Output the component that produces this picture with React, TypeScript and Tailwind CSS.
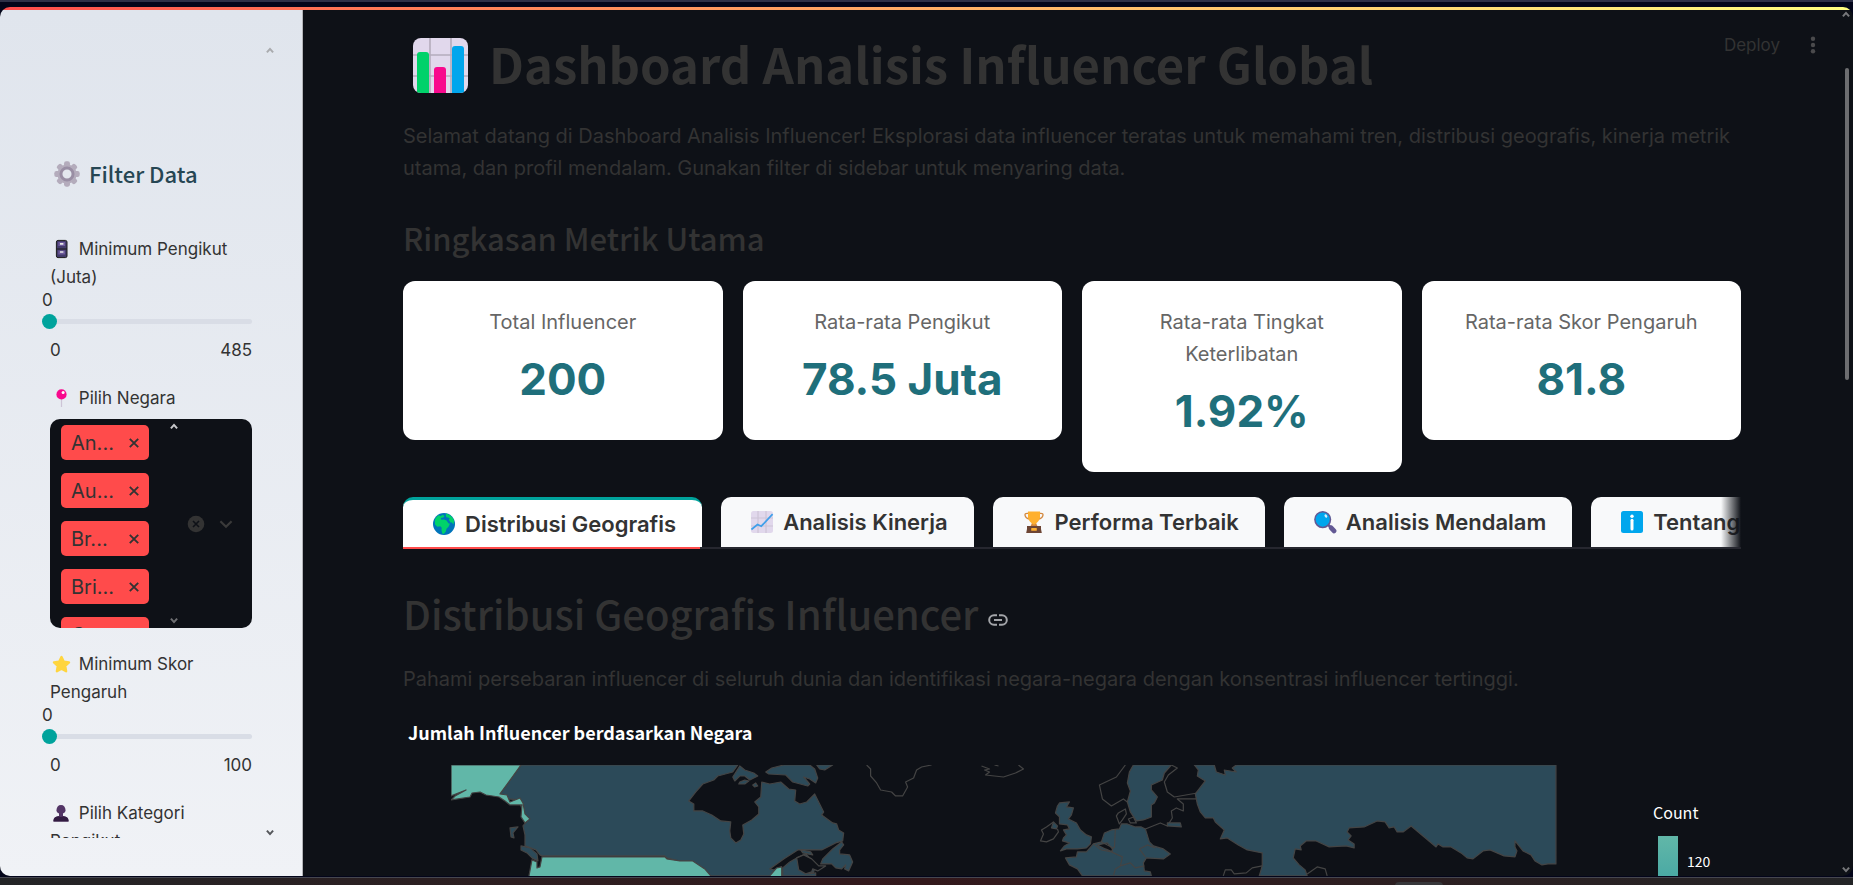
import type { ReactNode } from "react";

const SOURCE = "font-['Noto_Sans_CJK_SC',sans-serif]";

function Chevron({ up = false, className = "" }: { up?: boolean; className?: string }) {
  return (
    <svg viewBox="0 0 8 8" className={`pointer-events-none h-2 w-2 ${className}`} aria-hidden="true">
      <path d={up ? "M0.9 6.4 4 2.9 7.1 6.4" : "M0.9 1.6 4 5.1 7.1 1.6"} fill="none" stroke="currentColor" strokeWidth="2" />
    </svg>
  );
}

function BarChartIcon() {
  return (
    <svg viewBox="0 0 56 56" className="mt-[6px] h-14 w-14 shrink-0" aria-hidden="true">
      <clipPath id="bars"><rect x="0" y="0" width="55" height="55" rx="8" /></clipPath>
      <g clipPath="url(#bars)">
        <rect width="55" height="55" fill="#e1d8ec" />
        <path d="M17 0v55M38 0v55M0 17h55M0 38h55" stroke="#b4acbc" strokeWidth="1.6" />
        <path d="M4 56V17q0-3 3-3h6q3 0 3 3v39z" fill="#00d26a" />
        <path d="M21 56V32q0-3 3-3h6q3 0 3 3v24z" fill="#f8098d" />
        <path d="M39 56V11q0-3 3-3h6q3 0 3 3v45z" fill="#00a6ed" />
      </g>
    </svg>
  );
}

function GearIcon() {
  return (
    <svg viewBox="0 0 32 32" className="mt-[2px] h-7 w-7 shrink-0" aria-hidden="true">
      <g fill="#b4acbc">
        {[0, 45, 90, 135].map((a) => (
          <rect key={a} x="12.6" y="1.5" width="6.8" height="29" rx="2.4" transform={`rotate(${a} 16 16)`} />
        ))}
        <circle cx="16" cy="16" r="11" />
      </g>
      <circle cx="16" cy="16" r="6.9" fill="#e3e7ee" stroke="#998ea4" strokeWidth="3.4" />
    </svg>
  );
}

function CabinetIcon() {
  return (
    <svg viewBox="0 0 24 20" className="inline h-5 w-6 align-[-4px]" aria-hidden="true">
      <rect x="6.4" y="1.4" width="10.6" height="17.2" rx="1.6" fill="#433b6b" stroke="#1c1c1c" strokeWidth="1" />
      <path d="M6.4 10h10.6" stroke="#1c1c1c" strokeWidth="1" />
      <path d="M8.3 3h6.8v4H8.3zM8.3 11.5h6.8v4H8.3z" fill="#6d5a9c" />
      <path d="M10 4.8h3.4M10 13h3.4" stroke="#e6e6e6" strokeWidth="1.7" />
    </svg>
  );
}

function PinIcon() {
  return (
    <svg viewBox="0 0 24 20" className="inline h-5 w-6 align-[-4px]" aria-hidden="true">
      <path d="M11.5 10v9" stroke="#cdc4d6" strokeWidth="1.2" />
      <circle cx="11.5" cy="6.4" r="5.1" fill="#f8098d" />
      <circle cx="13.1" cy="4.6" r="1.5" fill="#fff" />
    </svg>
  );
}

function StarIcon() {
  return (
    <svg viewBox="0 0 24 20" className="inline h-5 w-6 align-[-4px]" aria-hidden="true">
      <path d="M11.5 3 13.8 7.7 19 8.4 15.2 12 16.1 17.2 11.5 14.8 6.9 17.2 7.8 12 4 8.4 9.2 7.7z" fill="#ffd53e" stroke="#ffd53e" strokeWidth="2.4" strokeLinejoin="round" />
    </svg>
  );
}

function PersonIcon() {
  return (
    <svg viewBox="0 0 24 20" className="inline h-5 w-6 align-[-4px]" aria-hidden="true">
      <path d="M3.5 18.5v-1.2Q3.8 13.4 9 13V10.5Q6.4 9.7 6.4 7.6 6.7 2 11 2t4.6 5.6q0 2.1-2.6 2.9V13q5.2.4 5.5 4.3v1.2z" fill="#533566" />
      <path d="M3.5 18.5v-1.2Q3.8 13.9 8.6 13.2q2.4 1.6 4.8 0 4.8.7 5.1 4.1v1.2z" fill="#321b41" />
    </svg>
  );
}

function GlobeIcon() {
  return (
    <svg viewBox="0 0 24 24" className="h-6 w-6" aria-hidden="true">
      <circle cx="12" cy="12" r="11" fill="#0074ba" />
      <path d="M3 7.5Q4 5 6.5 3.2L8.6 4l2.2-1.2L12.5 4l-1 1.6-2.6.5.4 1.6 2.6-.3 2.6 1.2 1.8 2.7 1.6.4-1.4 3-2 2-.8 3-2 2.3-1.4-.4-.8-3.4.2-2.4-1.4-1.5-3 .4L3 12.5 2.9 9.6z" fill="#00d26a" />
      <path d="M14 1.5Q20 3 22 8.4l-.5 4-1.8-2.2-.9.6-2-3.1 1-1.3-1.7-.8-1.8-.4-.5-1.8z" fill="#00d26a" />
    </svg>
  );
}

function LineChartIcon() {
  return (
    <svg viewBox="0 0 24 24" className="h-6 w-6" aria-hidden="true">
      <rect x="1" y="1" width="22" height="22" rx="2.5" fill="#e1d8ec" />
      <path d="M8 1v22M16 1v22M1 8h22M1 16h22" stroke="#cdc4d6" strokeWidth="1.2" />
      <path d="M1.4 19.5 7.5 14.5 11.3 16.2 22.6 4.2" fill="none" stroke="#3f9fea" strokeWidth="1.7" />
    </svg>
  );
}

function TrophyIcon() {
  return (
    <svg viewBox="0 0 24 24" className="h-6 w-6" aria-hidden="true">
      <path d="M7 3.4H5.2Q2.8 3.4 3 5.2q.6 3.4 4.6 3.8M17 3.4h1.8q2.4 0 2.2 1.8-.6 3.4-4.6 3.8" fill="none" stroke="#d3883e" strokeWidth="1.3" />
      <path d="M10.8 11h2.4l2.6 6H8.2z" fill="#d3883e" />
      <path d="M6 1.5h12v6q-.8 4.2-6 7.3-5.2-3.1-6-7.3z" fill="#ffb02e" />
      <path d="M5 16h14v3l.8 4H4.2l.8-4z" fill="#6d4534" />
      <rect x="9.2" y="18" width="5.6" height="2.8" rx=".6" fill="#ffb02e" />
    </svg>
  );
}

function LensIcon() {
  return (
    <svg viewBox="0 0 24 24" className="h-6 w-6" aria-hidden="true">
      <path d="m15 14.6 2.4 2.4" stroke="#635994" strokeWidth="2.6" />
      <path d="m18.2 17.9 2.8 3" stroke="#635994" strokeWidth="4.8" strokeLinecap="round" />
      <circle cx="9.7" cy="9.6" r="7.8" fill="#00a6ed" stroke="#635994" strokeWidth="1.5" />
      <ellipse cx="12.9" cy="6" rx="1.2" ry="1.8" fill="#d3effc" transform="rotate(-35 12.9 6)" />
    </svg>
  );
}

function InfoIcon() {
  return (
    <svg viewBox="0 0 24 24" className="h-6 w-6" aria-hidden="true">
      <rect x="1" y="1" width="22" height="22" rx="2.5" fill="#00a6ed" />
      <circle cx="12" cy="6.2" r="1.7" fill="#fff" />
      <path d="M12 10.2v8.8" stroke="#fff" strokeWidth="3" strokeLinecap="round" />
    </svg>
  );
}

function RangeField({ id, icon, label, max }: { id: string; icon: ReactNode; label: string; max: number }) {
  return (
    <div>
      <label htmlFor={id} className="block leading-7">
        {icon} {label}
      </label>
      <output htmlFor={id} className="-ml-2 block leading-[19px]">0</output>
      <input
        id={id}
        type="range"
        min={0}
        max={max}
        defaultValue={0}
        className="-ml-2 mt-[3px] block h-4 w-[calc(100%+8px)] appearance-none bg-transparent [&::-webkit-slider-runnable-track]:h-[5px] [&::-webkit-slider-runnable-track]:rounded-full [&::-webkit-slider-runnable-track]:bg-[#d9dde6] [&::-webkit-slider-thumb]:-mt-[5px] [&::-webkit-slider-thumb]:size-[15px] [&::-webkit-slider-thumb]:appearance-none [&::-webkit-slider-thumb]:rounded-full [&::-webkit-slider-thumb]:bg-[#00a39c]"
      />
      <div className="mt-[9px] flex justify-between leading-6">
        <span>0</span>
        <span>{max}</span>
      </div>
    </div>
  );
}

const countries = ["An...", "Au...", "Br...", "Bri...", "Ca..."];

function CountrySelect() {
  return (
    <div>
      <div id="negara" className="leading-7">
        <PinIcon /> Pilih Negara
      </div>
      <div role="group" aria-labelledby="negara" className="relative mt-[7px] flex h-[209px] items-center overflow-hidden rounded-[10px] bg-[#0e1117]">
        <ul className="flex h-full w-[118px] flex-col gap-[13px] overflow-hidden pt-[6px] pl-[11px]">
          {countries.map((c) => (
            <li key={c} className="flex h-[35px] w-[88px] shrink-0 items-center justify-between rounded-[5px] bg-[#ff4b4b] pr-[9px] pl-[10px] text-xl">
              {c}
              <button type="button" aria-label={`Hapus ${c}`}>
                <svg viewBox="0 0 12 12" className="size-3" aria-hidden="true">
                  <path d="m1.8 1.8 8.4 8.4M10.2 1.8 1.8 10.2" stroke="currentColor" strokeWidth="1.9" />
                </svg>
              </button>
            </li>
          ))}
        </ul>
        <div className="flex h-full flex-col justify-between py-[3px] pl-[2px]">
          <Chevron up className="text-[#c8c9cc]" />
          <Chevron className="text-[#6f7073]" />
        </div>
        <div className="flex grow items-center justify-end gap-[14px] pr-[19px]">
          <button type="button" aria-label="Hapus semua">
            <svg viewBox="0 0 18 18" className="size-[18px]" aria-hidden="true">
              <circle cx="9" cy="9" r="8.3" fill="#333" />
              <path d="m6 6 6 6M12 6l-6 6" stroke="#0e1117" strokeWidth="1.6" />
            </svg>
          </button>
          <button type="button" aria-label="Buka daftar">
            <svg viewBox="0 0 14 18" className="h-[18px] w-[14px]" aria-hidden="true">
              <path d="M1.4 6.2 7 11.8l5.6-5.6" fill="none" stroke="#3a3a3a" strokeWidth="2.2" />
            </svg>
          </button>
        </div>
      </div>
    </div>
  );
}

function Sidebar() {
  return (
    <aside className="relative flex w-[303px] shrink-0 flex-col border-r border-[#b3b4b8] bg-linear-to-b from-[#e0e5ed] to-[#f0f2f6] pb-[38px] text-[17px] text-[#333]">
      <Chevron up className="absolute top-[36px] right-[28px] text-[#a9abae]" />
      <div className="flex min-h-0 grow flex-col overflow-hidden pt-[148px] pr-[50px] pl-[50px]">
        <h2 className={`flex shrink-0 items-center gap-[8px] pl-[3px] text-[22px] leading-[30px] font-medium text-[#264653] ${SOURCE}`}>
          <GearIcon />
          Filter Data
        </h2>
        <div className="mt-[47px] flex flex-col gap-[22px]">
          <RangeField id="pengikut" icon={<CabinetIcon />} label="Minimum Pengikut (Juta)" max={485} />
          <CountrySelect />
          <RangeField id="skor" icon={<StarIcon />} label="Minimum Skor Pengaruh" max={100} />
          <div className="leading-7">
            <PersonIcon /> Pilih Kategori Pengikut
          </div>
        </div>
      </div>
      <Chevron className="absolute right-[28px] bottom-[39px] text-[#55575b]" />
    </aside>
  );
}

const metrics = [
  { label: "Total Influencer", value: "200" },
  { label: "Rata-rata Pengikut", value: "78.5 Juta" },
  { label: "Rata-rata Tingkat Keterlibatan", value: "1.92%" },
  { label: "Rata-rata Skor Pengaruh", value: "81.8" },
];

const tabs = [
  { label: "Distribusi Geografis", icon: <GlobeIcon /> },
  { label: "Analisis Kinerja", icon: <LineChartIcon /> },
  { label: "Performa Terbaik", icon: <TrophyIcon /> },
  { label: "Analisis Mendalam", icon: <LensIcon /> },
  { label: "Tentang", icon: <InfoIcon /> },
];

function Tabs() {
  return (
    <div className="relative mt-[25px] overflow-hidden">
      <div role="tablist" className="flex gap-[19px] border-b-2 border-[#26272f]">
        {tabs.map((t, i) => (
          <button
            key={t.label}
            type="button"
            role="tab"
            aria-selected={i === 0}
            className={`flex h-[50px] shrink-0 items-center gap-[9px] rounded-t-[10px] pr-[26px] pl-[29px] text-[22px] font-semibold whitespace-nowrap text-[#333] ${
              i === 0
                ? "relative border-t-[3px] border-[#00a39c] bg-white after:absolute after:top-full after:right-[2px] after:left-0 after:h-[2px] after:bg-[#ff4b4b]"
                : "bg-[#f8f9fa]"
            }`}
          >
            {t.icon}
            {t.label}
          </button>
        ))}
      </div>
      <div className="absolute top-0 right-0 h-[50px] w-5 bg-linear-to-r from-transparent to-[#0e1117]" />
    </div>
  );
}

const TEAL = "#61b7a8";
const BLUE = "#2c4a59";

function WorldMap() {
  return (
    <svg viewBox="451 765 1107 140" className="min-w-0 flex-1" role="img" aria-label="Peta jumlah influencer">
      <g stroke="#444" strokeWidth="1.2" strokeLinejoin="round">
        {/* Kanada */}
        <path fill={BLUE} d="M521 765H738L733 772 718 776 714 780 703 784 696 792 689 801 694 804 694 811 703 811 712 815 721 821 731 822 730 831 731 838 736 843 741 840 744 834 743 825 752 820 759 814 759 807 755 802 761 797 762 782 770 784 781 782 789 789 796 790 795 801 800 804 807 802 815 794 821 806 824 812 822 815 833 823 837 824 839 830 844 833 843 841 836 843 822 850 798 850 784 859 770 869 774 870 782 867 783 876 708 876 704 871 694 862 682 862 667 858 665 856 542 856 540 855 536 850 525 846 525 835 523 826 528 820 523 812 519 800 508 799 500 794z" />
        {/* Alaska */}
        <path fill={TEAL} d="M451 765H521L500 794 507 795 510 802 520 798 523 803 525 814 530 819 525 823 521 817 522 805 510 805 505 801 499 797 486 795 480 792 472 793 470 797 451 800 455 796 466 790 451 796z" />
        {/* Amerika Serikat */}
        <path fill={TEAL} d="M542 857H665L667 859 680 861 693 861 705 869 711 876 711 905H528L529 876 532 860 537 862 537 868 540 867zM770 876 777 868 782 867 782 880 768 880z" />
        {/* Pulau dan teluk */}
        <path fill={BLUE} d="M510 828 518 827 513 833 514 838 511 837zM521 846 530 848 537 854 538 861 532 858 527 853 521 850zM740 766 733 777 735 781 740 776 745 776 750 780 758 776 754 773 745 770zM740 782 745 780 749 781 745 784 739 784zM753 785 756 783 758 786 755 787zM766 772 772 768 784 765H810L815 769 818 778 816 783 810 779 804 777 810 784 808 786 793 782 786 775 769 774zM817 765H833L825 770 820 769zM842 842 844 845 840 850 840 854 850 855 853 862 849 871 845 869 846 865 842 869 836 868 832 864 821 864 823 859 833 849zM801 850 811 852 813 855 803 853zM797 858 806 854 816 864 814 872 809 874 816 873 816 876H783L783 868 790 862z" />
        <path fill="#0e1117" d="M797 858 804 855 812 859 819 866 826 866 818 871 813 869 812 872 806 874 799 870z" />
        <path fill="none" d="M867 765 871 769 871 776 877 783 881 790 892 792 896 796 903 796 908 787 906 782 914 778 917 770 922 767 932 765M982 766 990 769 985 770 990 772 986 775 1004 777 1016 773 1024 769 1019 765M995 765 999 766" />
        {/* Inggris Raya dan Irlandia */}
        <path fill={BLUE} d="M1060 803 1070 802 1067 807 1074 808 1072 815 1069 819 1077 823 1081 830 1087 835 1092 837 1091 844 1087 848 1078 849 1067 849 1061 851 1065 846 1070 843 1063 841 1064 838 1067 835 1064 830 1070 829 1068 825 1060 824 1060 817 1056 813 1058 806zM1054 822 1058 826 1057 829 1052 828z" />
        <path fill="none" d="M1054 822 1047 827 1042 830 1044 834 1041 841 1047 842 1054 839 1059 832 1058 829" />
        {/* Eropa Barat */}
        <path fill={BLUE} d="M1066 858 1077 857 1078 852 1087 852 1094 844 1102 842 1105 833 1112 830 1120 829 1122 824 1128 824 1136 827 1142 827 1146 829 1150 842 1154 846 1164 849 1171 854 1164 859 1147 858 1144 863 1145 871 1151 872 1152 876H1083L1078 869 1070 865z" />
        <path fill="#0e1117" d="M1098 845 1108 843 1113 849 1113 852 1106 849z" />
        <path fill="none" d="M1094 844 1102 850 1112 852 1123 857 1121 866 1116 869 1114 876M1116 829 1115 848M1112 852 1114 848 1102 842M1140 849 1148 845 1156 848M1140 849 1146 857M1121 866 1131 863 1136 868 1145 866" />
        {/* Skandinavia */}
        <path fill={BLUE} d="M1134 765H1172L1165 773 1163 780 1152 785 1152 790 1158 797 1155 803 1152 805 1152 817 1144 820 1137 821 1131 812 1128 802 1131 791 1128 783 1130 772z" />
        <path fill="none" d="M1126 765 1117 777 1100 785 1103 799 1112 806 1124 799 1128 802M1119 813 1126 809 1127 814 1123 820 1120 824 1117 816zM1129 819 1134 817 1137 823 1131 823zM1172 765 1178 768 1169 775 1165 782 1168 792 1175 797 1198 793M1146 829 1161 823 1168 826 1173 818 1172 811 1177 808 1184 811 1184 804 1178 799 1198 799" />
        <path fill={BLUE} d="M1168 823 1181 823 1182 827 1168 826z" />
        {/* Rusia */}
        <path fill={BLUE} d="M1195 765H1557V864L1549 864 1543 865 1536 861 1532 855 1524 851 1516 841 1516 847 1518 851 1516 857 1505 856 1491 850 1484 851 1474 859 1468 858 1462 853 1452 847 1444 847 1439 844 1437 847 1412 826 1404 832 1398 832 1395 827 1390 828 1386 822 1378 821 1365 827 1350 828 1348 832 1352 836 1349 840 1355 844 1355 848 1347 846 1330 847 1317 841 1307 841 1301 846 1302 850 1296 849 1294 858 1300 865 1306 870 1308 876H1260L1263 866 1263 853 1248 850 1239 845 1228 838 1221 839 1225 830 1216 822 1214 818 1206 818 1201 812 1198 804 1196 794 1206 781 1198 776 1199 770z" />
        <path fill="#0e1117" d="M1215 765 1217 772 1226 775 1225 770 1237 772 1233 768 1237 765" />
        <path fill="none" d="M1224 876 1226 870 1232 870 1235 874 1247 873 1253 868 1263 866M1308 874 1318 867 1326 869 1328 876" />
      </g>
    </svg>
  );
}

function MainPanel() {
  return (
    <main className="relative min-w-0 flex-1 overflow-hidden pt-5 pr-[112px] pl-[100px] text-xl leading-8 text-[#333]">
      <div className="absolute top-[23px] right-[37px] flex items-center gap-[30px]">
        <button type="button" className="text-[17px] leading-6">Deploy</button>
        <button type="button" aria-label="Menu">
          <svg viewBox="0 0 6 18" className="h-[18px] w-[6px]" fill="#4a4a4c" aria-hidden="true">
            <circle cx="3" cy="2.8" r="2.2" /><circle cx="3" cy="9" r="2.2" /><circle cx="3" cy="15.2" r="2.2" />
          </svg>
        </button>
      </div>
      <Chevron up className="absolute top-0 right-[3px] text-[#77787b]" />
      <div className="absolute top-[58px] right-1 h-[312px] w-1 rounded-full bg-[#6c6d70]" />
      <Chevron className="absolute right-[3px] bottom-[2px] text-[#77787b]" />

      <h1 className={`flex items-center gap-5 pl-[10px] text-[49px] leading-[66px] font-bold whitespace-nowrap ${SOURCE}`}>
        <BarChartIcon />
        Dashboard Analisis Influencer Global
      </h1>
      <p className="mt-6">
        Selamat datang di Dashboard Analisis Influencer! Eksplorasi data influencer teratas untuk memahami tren, distribusi geografis, kinerja metrik utama, dan profil mendalam. Gunakan filter di sidebar untuk menyaring data.
      </p>
      <h3 className={`mt-[33px] text-[31px] leading-[42px] font-medium ${SOURCE}`}>Ringkasan Metrik Utama</h3>
      <div className="mt-[22px] grid grid-cols-4 items-start gap-5">
        {metrics.map((m) => (
          <div key={m.label} className="rounded-xl bg-white p-[25px] text-center">
            <div className="text-[#666]">{m.label}</div>
            <div className="mt-[6px] text-[44px] leading-[71px] font-bold text-[#1f6f7b]">{m.value}</div>
          </div>
        ))}
      </div>
      <Tabs />
      <div className="mt-[37px] flex items-center gap-[10px]">
        <h2 className={`text-[40px] leading-[54px] font-medium ${SOURCE}`}>Distribusi Geografis Influencer</h2>
        <a href="#distribusi-geografis-influencer" aria-label="Tautan bagian" className="pt-[14px] text-[#a3a5a9]">
          <svg viewBox="0 0 20 12" className="h-3 w-5" fill="none" stroke="currentColor" strokeWidth="2" aria-hidden="true">
            <path d="M9 1.2H6a4.8 4.8 0 0 0 0 9.6h3M11 1.2h3a4.8 4.8 0 0 1 0 9.6h-3M6 6h8" />
          </svg>
        </a>
      </div>
      <p className="mt-[23px]">Pahami persebaran influencer di seluruh dunia dan identifikasi negara-negara dengan konsentrasi influencer tertinggi.</p>
      <section className={SOURCE}>
        <h4 className="mt-[25px] pl-[5px] text-lg leading-6 font-bold text-white">Jumlah Influencer berdasarkan Negara</h4>
        <div className="mt-[21px] flex items-start pl-12">
          <WorldMap />
          <div className="w-[184px] shrink-0 pt-[35px] pl-[96px] text-white">
            <div className="text-base leading-6">Count</div>
            <div className="mt-[12px] flex gap-[9px] pl-[5px]">
              <div className="h-[120px] w-5 bg-linear-to-b from-[#61b7a8] to-[#008f9c]" />
              <div className="pt-[13px] text-sm leading-6">120</div>
            </div>
          </div>
        </div>
      </section>
    </main>
  );
}

export default function App() {
  return (
    <div className="flex h-screen flex-col overflow-hidden bg-[#03051a] font-['Inter',sans-serif]">
      <div className="mb-[5px] h-[2px] shrink-0 bg-[#2e3047]" />
      <div className="flex min-h-0 flex-1 flex-col overflow-hidden rounded-[10px] bg-[#0e1117]">
        <div className="h-[3px] shrink-0 bg-linear-to-r from-[#ff4b4b] to-[#fffd80]" />
        <div className="flex min-h-0 flex-1">
          <Sidebar />
          <MainPanel />
        </div>
      </div>
      <div className="mt-px flex h-2 shrink-0 justify-center border-t border-[#45464f] bg-linear-to-r from-[#232426] via-[#33181b] to-[#232426] pt-[4px] pl-[985px]">
        <div className="h-2 w-12 rounded-t bg-[#37373a]" />
      </div>
    </div>
  );
}
